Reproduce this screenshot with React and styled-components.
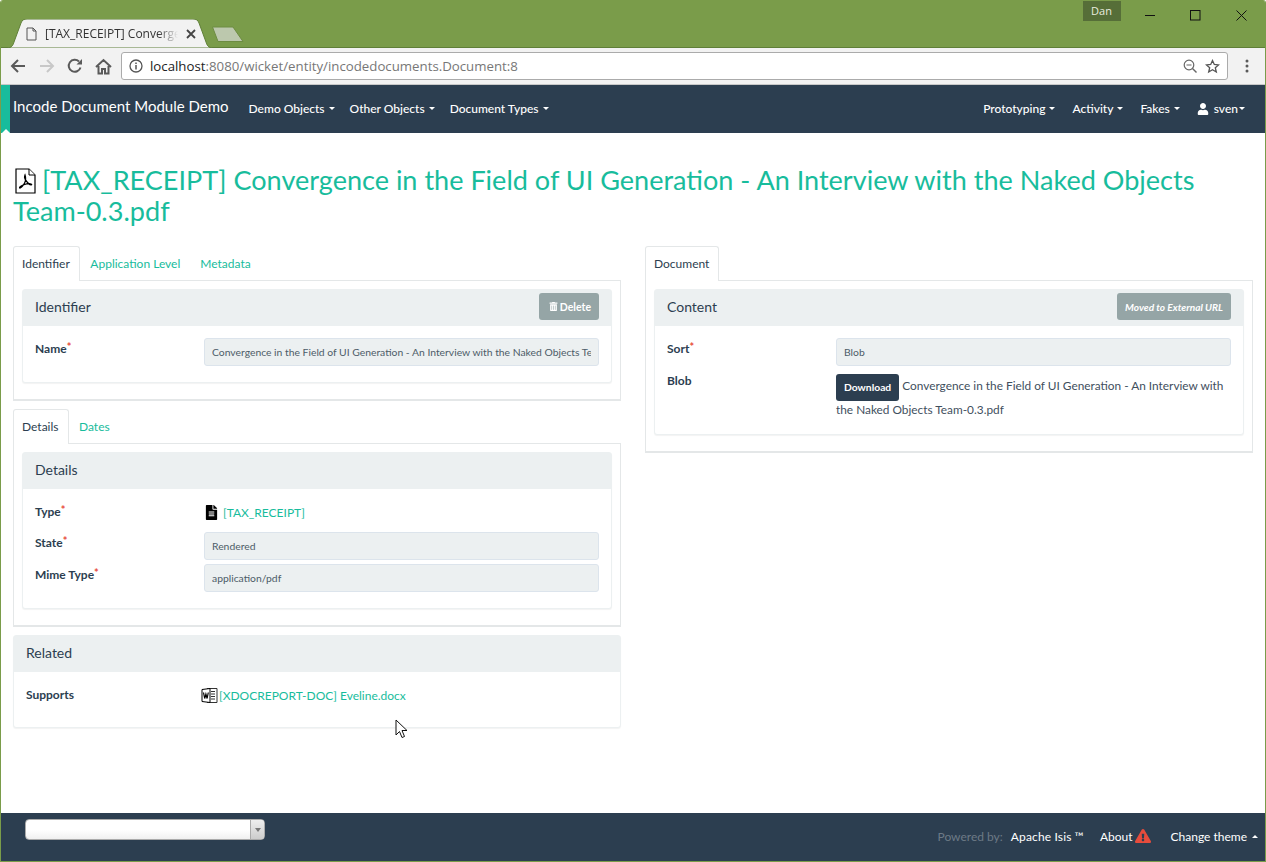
import React from 'react';
import styled, { createGlobalStyle } from 'styled-components';
import { FaUser, FaTrashAlt, FaFileAlt, FaExclamationTriangle } from 'react-icons/fa';

const GlobalStyle = createGlobalStyle`
  html, body {
    margin: 0;
    padding: 0;
    background: #fff;
  }
  * {
    box-sizing: border-box;
  }
  body {
    font-family: Lato, "Open Sans", sans-serif;
    color: #2c3e50;
  }
`;

const Frame = styled.div`
  width: 1266px;
  height: 862px;
  display: flex;
  flex-direction: column;
  overflow: hidden;
  background: #fff;
  border: 1px solid #7a9c4a;
  border-top: 0;
  border-radius: 3px 3px 0 0;
`;

/* browser chrome */
const TitleBar = styled.div`
  height: 48px;
  flex: none;
  background: #7a9c4a;
  display: flex;
  align-items: flex-start;
  border-bottom: 1px solid #5f7f38;
  margin-left: -1px;
  margin-right: -1px;
  padding-right: 2px;
`;

const ChromeTab = styled.div`
  position: relative;
  margin: 19px 0 0 7px;
  width: 206px;
  height: 29px;
  display: flex;
  align-items: center;
  padding: 0 16px 0 19px;
  font-family: "Open Sans", sans-serif;
  font-size: 12px;
  color: #333;
  > svg.shape {
    position: absolute;
    inset: 0;
  }
`;

const TabTitle = styled.span`
  position: relative;
  margin-left: 8px;
  width: 133px;
  white-space: nowrap;
  overflow: hidden;
  mask-image: linear-gradient(90deg, #000 85%, transparent);
`;

const NewTab = styled.svg`
  margin: 26px 0 0 -2px;
  flex: none;
`;

const TitleSpacer = styled.div`
  flex: 1;
`;

const UserBadge = styled.div`
  width: 38px;
  height: 20px;
  margin: 1px 7px 0 0;
  background: #566e38;
  color: #e8ecdf;
  font-family: "Open Sans", sans-serif;
  font-size: 11px;
  line-height: 20px;
  text-align: center;
`;

const WinButton = styled.div`
  width: 45.5px;
  height: 30px;
  display: flex;
  align-items: center;
  justify-content: center;
`;

const Toolbar = styled.div`
  height: 37px;
  flex: none;
  background: #f2f2f2;
  display: flex;
  align-items: center;
  padding: 0 0 0 9px;
  border-bottom: 1px solid #c8c8c8;
`;

const NavIcon = styled.svg`
  flex: none;
  margin-right: ${(p) => p.$gap}px;
`;

const Omnibox = styled.div`
  width: 1107px;
  height: 28px;
  margin-left: 9px;
  background: #fff;
  border: 1px solid #ababab;
  border-radius: 3px;
  display: flex;
  align-items: center;
  padding: 0 7px;
  font-family: "Open Sans", sans-serif;
  font-size: 13.25px;
  color: #222;
`;

const UrlRest = styled.span`
  color: #777;
`;

const UrlText = styled.div`
  flex: 1;
  margin-left: 7px;
  white-space: nowrap;
`;

const MenuDots = styled.svg`
  margin-left: 17px;
`;

/* app navbar */
const Navbar = styled.nav`
  height: 48px;
  flex: none;
  background: #2c3e50;
  display: flex;
  align-items: stretch;
  color: #fff;
`;

const NavStripe = styled.div`
  position: relative;
  width: 9px;
  background: #18bc9c;
  &::after {
    content: '';
    position: absolute;
    left: 1px;
    bottom: 0;
    border: 4px solid transparent;
    border-top: 0;
    border-bottom-color: #fff;
  }
`;

const Brand = styled.div`
  margin: 0 20px 0 3px;
  font-size: 15px;
  line-height: 43px;
  white-space: nowrap;
`;

const NavGroup = styled.div`
  display: flex;
  align-items: center;
  gap: ${(p) => p.$gap || 15}px;
  margin-left: ${(p) => (p.$right ? 'auto' : 0)};
  padding-right: ${(p) => (p.$right ? 20 : 0)}px;
  padding-bottom: 1px;
`;

const NavItem = styled.span`
  display: inline-flex;
  align-items: center;
  font-size: 12px;
  font-weight: 500;
  white-space: nowrap;
  &::after {
    content: '';
    margin-left: ${(p) => (p.$tight ? 1 : 4)}px;
    border: 3px solid transparent;
    border-bottom: 0;
    border-top-color: #fff;
  }
  svg {
    margin-right: 5px;
  }
`;

/* page body */
const Main = styled.main`
  flex: 1;
  padding: 32px 12px 0 12px;
`;

const PageTitle = styled.h1`
  margin: 0 0 20px;
  font-size: 27.05px;
  font-weight: 400;
  line-height: 30.5px;
  color: #18bc9c;
  svg {
    vertical-align: -4px;
    margin: -4px 6px 0 2px;
  }
`;

const Columns = styled.div`
  display: grid;
  grid-template-columns: 608px 608px;
  gap: 24px;
`;

const Column = styled.div`
  display: flex;
  flex-direction: column;
  gap: 8px;
`;

const Tabs = styled.div`
  display: flex;
  gap: 1px;
  height: 35px;
  border-bottom: 1px solid #e4e7e8;
`;

const Tab = styled.div`
  height: 35px;
  padding: ${(p) => (p.$active ? '0 9px 0 8px' : '0 8.5px')};
  font-size: 12px;
  line-height: 33px;
  color: ${(p) => (p.$active ? '#2c3e50' : '#18bc9c')};
  background: ${(p) => (p.$active ? '#fff' : 'transparent')};
  border: 1px solid ${(p) => (p.$active ? '#e4e7e8' : 'transparent')};
  border-bottom: 0;
  border-radius: 3px 3px 0 0;
  white-space: nowrap;
`;

const TabBody = styled.div`
  padding: 8px 8px 16px;
  border-style: solid;
  border-width: 0 1px 2px 1px;
  border-color: #e4e7e8;
`;

const Panel = styled.section`
  border: 1px solid #ecf0f1;
  border-radius: 3px;
  box-shadow: 0 1px 1px rgba(0, 0, 0, 0.05);
  background: #fff;
`;

const PanelHeader = styled.div`
  height: 36px;
  background: #ecf0f1;
  display: flex;
  align-items: center;
  justify-content: space-between;
  padding: 0 12px 3px;
  font-size: 14px;
  color: #2c3e50;
`;

const ActionButton = styled.div`
  height: 27px;
  padding: ${(p) => (p.$italic ? '0 8px' : '0 8px 0 10px')};
  background: #95a5a6;
  border-radius: 3px;
  color: #fff;
  font-size: ${(p) => (p.$italic ? 10.1 : 10.5)}px;
  font-weight: 700;
  font-style: ${(p) => (p.$italic ? 'italic' : 'normal')};
  display: flex;
  align-items: center;
  gap: 2px;
`;

const PanelBody = styled.div`
  padding: ${(p) => (p.$pad ? p.$pad : '12px 12px 16px')};
  display: flex;
  flex-direction: column;
  gap: 4px;
`;

const FieldRow = styled.div`
  display: grid;
  grid-template-columns: ${(p) => p.$label || 169}px minmax(0, 1fr);
  min-height: 27px;
  margin-top: ${(p) => p.$top || 0}px;
`;

const Label = styled.label`
  padding-top: ${(p) => (p.$flush ? 0 : 4)}px;
  font-size: 12px;
  font-weight: 700;
  color: #2c3e50;
  line-height: 14px;
  em {
    color: #e74c3c;
    font-style: normal;
    font-size: 11px;
    line-height: 0;
    vertical-align: 2px;
  }
`;

const ReadOnlyInput = styled.div`
  min-width: 0;
  height: 28px;
  padding: 0 7px;
  background: #ecf0f1;
  border: 1px solid #dce4ec;
  border-radius: 3px;
  color: #4c5c68;
  font-size: 10.35px;
  line-height: 27px;
`;

const InputText = styled.span`
  display: block;
  white-space: nowrap;
  overflow: hidden;
`;

const LinkLine = styled.div`
  display: flex;
  align-items: center;
  gap: ${(p) => p.$gap || 4}px;
  height: 23px;
  font-size: 12px;
  color: #18bc9c;
`;

const BlobText = styled.div`
  font-size: 11.85px;
  line-height: 24px;
  color: #3f4f5e;
`;

const DownloadButton = styled.span`
  display: inline-block;
  height: 27px;
  margin: -3px 3px -3px 0;
  padding: 0 8px;
  vertical-align: -1px;
  background: #2c3e50;
  color: #fff;
  border-radius: 3px;
  font-size: 10.3px;
  font-weight: 700;
  line-height: 27px;
`;

const CursorArrow = styled.svg`
  position: absolute;
  left: 395px;
  top: 719px;
`;

/* footer */
const Footer = styled.footer`
  height: 48px;
  flex: none;
  background: #2c3e50;
  display: flex;
  align-items: center;
  justify-content: space-between;
  padding: 0 7px 2px 24px;
  color: #fff;
  font-size: 12px;
`;

const ThemeSelect = styled.div`
  width: 240px;
  height: 21px;
  align-self: flex-start;
  margin-top: 6px;
  display: flex;
  background: linear-gradient(#fff 50%, #f0f0f0);
  border: 1px solid #aaa;
  border-radius: 4px;
  overflow: hidden;
`;

const SelectValue = styled.div`
  flex: 1;
`;

const SelectArrow = styled.div`
  width: 14px;
  background: linear-gradient(#eee, #ccc);
  border-left: 1px solid #aaa;
  display: flex;
  align-items: center;
  justify-content: center;
  &::after {
    content: '';
    border: 3px solid transparent;
    border-bottom: 0;
    border-top: 4px solid #777;
  }
`;

const FooterLinks = styled.div`
  display: flex;
  align-items: center;
`;

const PoweredBy = styled.span`
  color: #6c7a86;
  margin-right: 8px;
`;

const FooterLink = styled.span`
  display: inline-flex;
  align-items: center;
  gap: 2px;
  margin-right: ${(p) => p.$gap || 0}px;
  letter-spacing: ${(p) => p.$spread || 0}px;
  svg {
    color: #e74c3c;
  }
`;

const ThemeToggle = styled.span`
  display: inline-flex;
  align-items: center;
  &::after {
    content: '';
    margin-left: 5px;
    border: 3px solid transparent;
    border-top: 0;
    border-bottom-color: #fff;
  }
`;

const PdfIcon = () => (
  <svg width="21" height="26" viewBox="0 0 21 26" fill="none">
    <path d="M1 1h13l6 6v18H1z" fill="#fff" stroke="#000" strokeWidth="1.2" />
    <path d="M14 1v6h6" stroke="#000" strokeWidth="1" fill="#fff" />
    <path d="M10 7c1 3 1 6-1 9s-3 4-4 4 0-2 3-3 6-2 8-1-1 1-2 0-3-3-4-5 0-4 0-4z" stroke="#000" strokeWidth="1.3" />
  </svg>
);

const WordIcon = () => (
  <svg width="17" height="17" viewBox="0 0 17 17" fill="none">
    <path d="M6 1.5h10v14H6" stroke="#333" strokeWidth="1" fill="#fff" />
    <path d="M10 4.5h4M10 7h4M10 9.5h4M10 12h4" stroke="#333" strokeWidth="1" />
    <path d="M1 2.5l8-1v14l-8-1z" fill="#fff" stroke="#000" strokeWidth="1" />
    <path d="M2.5 5.5l1.2 6 1.2-4.5 1.2 4.5 1.2-6" stroke="#000" strokeWidth="1.2" />
  </svg>
);

const App = () => (
  <Frame>
    <GlobalStyle />
    <TitleBar>
      <ChromeTab>
        <svg className="shape" width="206" height="29" viewBox="0 0 206 29">
          <path d="M0 29C5 29 6 26 7 23L14 4C15 1 17 0 20 0H186C189 0 191 1 192 4L199 23C200 26 201 29 206 29Z" fill="#f2f2f2" stroke="#5f7f38" strokeWidth="1" />
        </svg>
        <svg style={{ position: 'relative' }} width="11" height="14" viewBox="0 0 11 14" fill="none">
          <path d="M1 1h6l3 3v9H1zM7 1v3h3" stroke="#555" strokeWidth="1" />
        </svg>
        <TabTitle>[TAX_RECEIPT] Convergence</TabTitle>
        <svg style={{ position: 'relative', marginLeft: 8 }} width="10" height="10" viewBox="0 0 10 10">
          <path d="M1 1l8 8M9 1l-8 8" stroke="#444" strokeWidth="1.8" />
        </svg>
      </ChromeTab>
      <NewTab width="33" height="17" viewBox="0 0 33 17">
        <path d="M1.5 1H22L32 15.500H7Z" fill="#bcc8ad" stroke="#6d8c42" strokeWidth="1" strokeLinejoin="round" />
      </NewTab>
      <TitleSpacer />
      <UserBadge>Dan</UserBadge>
      <WinButton>
        <svg width="11" height="11" viewBox="0 0 11 11"><path d="M0 5.500h10" stroke="#111" strokeWidth="1" /></svg>
      </WinButton>
      <WinButton>
        <svg width="11" height="11" viewBox="0 0 11 11"><rect x="0.500" y="0.500" width="9.500" height="9.500" fill="none" stroke="#111" strokeWidth="1" /></svg>
      </WinButton>
      <WinButton>
        <svg width="11" height="11" viewBox="0 0 11 11"><path d="M0.500 0.500l10 10M10.500 0.500l-10 10" stroke="#111" strokeWidth="1" /></svg>
      </WinButton>
    </TitleBar>

    <Toolbar>
      <NavIcon $gap={13} width="16" height="16" viewBox="0 0 16 16" fill="none">
        <path d="M15 8H2M8 2L2 8l6 6" stroke="#5a5a5a" strokeWidth="2" />
      </NavIcon>
      <NavIcon $gap={12} width="16" height="16" viewBox="0 0 16 16" fill="none">
        <path d="M1 8h13M8 2l6 6-6 6" stroke="#c8c8c8" strokeWidth="2" />
      </NavIcon>
      <NavIcon $gap={12} width="16" height="16" viewBox="0 0 16 16" fill="none">
        <path d="M13.500 9.500A6 6 0 1 1 12 3.500" stroke="#5a5a5a" strokeWidth="2" />
        <path d="M9.500 6.500H15V1z" fill="#5a5a5a" />
      </NavIcon>
      <NavIcon $gap={0} width="17" height="17" viewBox="0 0 17 17" fill="none">
        <path d="M1 9l7.500-7L16 9M3.500 8v7.500h3.500V11h3v4.500h3.500V8" stroke="#5a5a5a" strokeWidth="2" />
      </NavIcon>
      <Omnibox>
        <svg width="14" height="14" viewBox="0 0 14 14" fill="none">
          <circle cx="7" cy="7" r="6" stroke="#555" strokeWidth="1.300" />
          <path d="M7 6v4.500M7 3.500v1.500" stroke="#555" strokeWidth="1.500" />
        </svg>
        <UrlText>
          localhost<UrlRest>:8080/wicket/entity/incodedocuments.Document:8</UrlRest>
        </UrlText>
        <svg width="14" height="14" viewBox="0 0 14 14" fill="none" style={{ marginRight: 8 }}>
          <circle cx="6" cy="6" r="4.800" stroke="#666" strokeWidth="1.200" />
          <path d="M9.500 9.500L13.500 13.500" stroke="#666" strokeWidth="1.400" />
          <path d="M3.500 6h5" stroke="#666" strokeWidth="1.200" />
        </svg>
        <svg width="15" height="15" viewBox="0 0 15 15" fill="none">
          <path d="M7.500 1.500l1.800 4 4.200.4-3.200 2.800 1 4.300-3.800-2.300-3.800 2.300 1-4.300L1.500 5.900l4.200-.4z" stroke="#555" strokeWidth="1.300" />
        </svg>
      </Omnibox>
      <MenuDots width="4" height="14" viewBox="0 0 4 14">
        <circle cx="2" cy="2" r="1.500" fill="#5a5a5a" />
        <circle cx="2" cy="7" r="1.500" fill="#5a5a5a" />
        <circle cx="2" cy="12" r="1.500" fill="#5a5a5a" />
      </MenuDots>
    </Toolbar>

    <Navbar>
      <NavStripe />
      <Brand>Incode Document Module Demo</Brand>
      <NavGroup>
        <NavItem>Demo Objects</NavItem>
        <NavItem>Other Objects</NavItem>
        <NavItem>Document Types</NavItem>
      </NavGroup>
      <NavGroup $right $gap={17}>
        <NavItem>Prototyping</NavItem>
        <NavItem>Activity</NavItem>
        <NavItem>Fakes</NavItem>
        <NavItem $tight>
          <FaUser size={12} />
          sven
        </NavItem>
      </NavGroup>
    </Navbar>

    <Main>
      <PageTitle>
        <PdfIcon />
        [TAX_RECEIPT] Convergence in the Field of UI Generation - An Interview with the Naked Objects Team-0.3.pdf
      </PageTitle>
      <Columns>
        <Column>
          <div>
            <Tabs>
              <Tab $active>Identifier</Tab>
              <Tab>Application Level</Tab>
              <Tab>Metadata</Tab>
            </Tabs>
            <TabBody>
              <Panel>
                <PanelHeader>
                  Identifier
                  <ActionButton>
                    <FaTrashAlt size={9} />
                    Delete
                  </ActionButton>
                </PanelHeader>
                <PanelBody>
                  <FieldRow>
                    <Label>Name<em>*</em></Label>
                    <ReadOnlyInput>
                      <InputText>Convergence in the Field of UI Generation - An Interview with the Naked Objects Team-0.3.pdf</InputText>
                    </ReadOnlyInput>
                  </FieldRow>
                </PanelBody>
              </Panel>
            </TabBody>
          </div>
          <div>
            <Tabs>
              <Tab $active>Details</Tab>
              <Tab>Dates</Tab>
            </Tabs>
            <TabBody>
              <Panel>
                <PanelHeader>Details</PanelHeader>
                <PanelBody>
                  <FieldRow>
                    <Label>Type<em>*</em></Label>
                    <LinkLine>
                      <FaFileAlt size={15} color="#000" />
                      [TAX_RECEIPT]
                    </LinkLine>
                  </FieldRow>
                  <FieldRow>
                    <Label>State<em>*</em></Label>
                    <ReadOnlyInput><InputText>Rendered</InputText></ReadOnlyInput>
                  </FieldRow>
                  <FieldRow>
                    <Label>Mime Type<em>*</em></Label>
                    <ReadOnlyInput><InputText>application/pdf</InputText></ReadOnlyInput>
                  </FieldRow>
                </PanelBody>
              </Panel>
            </TabBody>
          </div>
          <Panel>
            <PanelHeader>Related</PanelHeader>
            <PanelBody>
              <FieldRow $label={175}>
                <Label>Supports</Label>
                <LinkLine $gap={1}>
                  <WordIcon />
                  [XDOCREPORT-DOC] Eveline.docx
                </LinkLine>
              </FieldRow>
            </PanelBody>
          </Panel>
        </Column>

        <Column>
          <div>
            <Tabs>
              <Tab $active>Document</Tab>
            </Tabs>
            <TabBody>
              <Panel>
                <PanelHeader>
                  Content
                  <ActionButton $italic>Moved to External URL</ActionButton>
                </PanelHeader>
                <PanelBody $pad="12px 12px 12px">
                  <FieldRow>
                    <Label>Sort<em>*</em></Label>
                    <ReadOnlyInput><InputText>Blob</InputText></ReadOnlyInput>
                  </FieldRow>
                  <FieldRow $top={4}>
                    <Label $flush>Blob</Label>
                    <BlobText>
                      <DownloadButton>Download</DownloadButton>
                      Convergence in the Field of UI Generation - An Interview with the Naked Objects Team-0.3.pdf
                    </BlobText>
                  </FieldRow>
                </PanelBody>
              </Panel>
            </TabBody>
          </div>
        </Column>
      </Columns>
    </Main>

    <CursorArrow width="13" height="20" viewBox="0 0 13 20">
      <path d="M1 1v15l3.500-3.500 2.500 6 2.500-1-2.500-6h5z" fill="#fff" stroke="#111" strokeWidth="1" />
    </CursorArrow>

    <Footer>
      <ThemeSelect>
        <SelectValue />
        <SelectArrow />
      </ThemeSelect>
      <FooterLinks>
        <PoweredBy>Powered by:</PoweredBy>
        <FooterLink $gap={16} $spread={0.15}>Apache Isis ™</FooterLink>
        <FooterLink $gap={20}>
          About
          <FaExclamationTriangle size={16} />
        </FooterLink>
        <ThemeToggle>Change theme</ThemeToggle>
      </FooterLinks>
    </Footer>
  </Frame>
);

export default App;
